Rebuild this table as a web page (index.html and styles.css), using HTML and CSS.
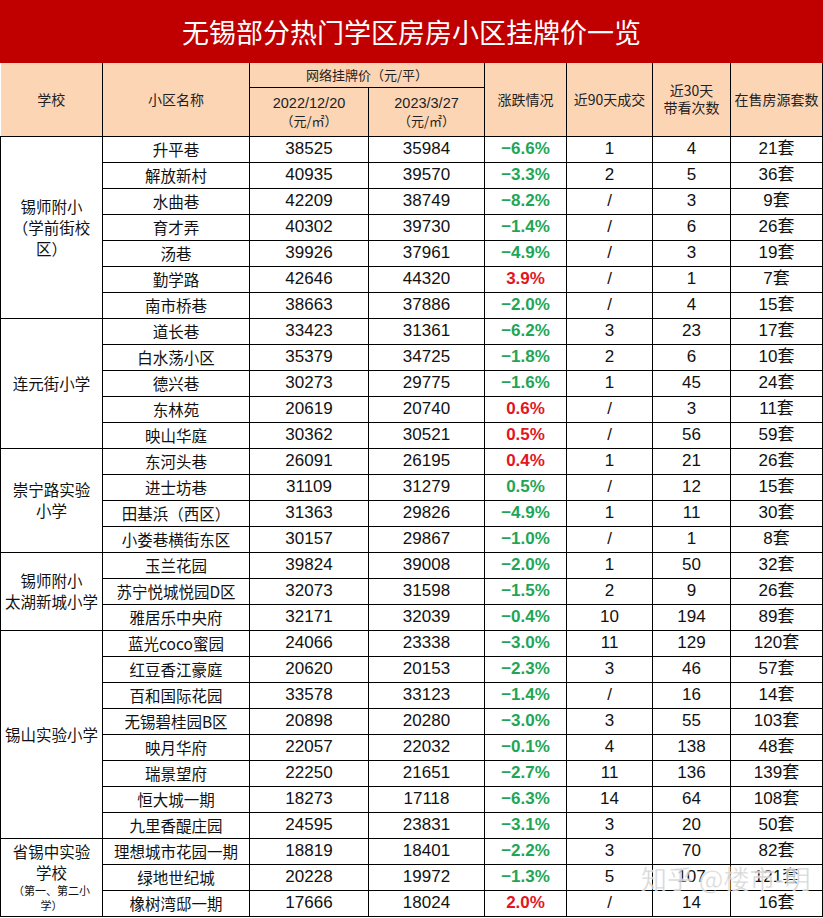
FILE: index.html
```html
<!DOCTYPE html>
<html lang="zh-CN">
<head>
<meta charset="utf-8">
<title>无锡部分热门学区房房小区挂牌价一览</title>
<link rel="stylesheet" href="styles.css">
</head>
<body>
<div class="sheet">
  <div class="title">无锡部分热门学区房房小区挂牌价一览</div>
  <table class="grid">
    <colgroup>
      <col class="c1"><col class="c2"><col class="c3"><col class="c4"><col class="c5"><col class="c6"><col class="c7"><col class="c8">
    </colgroup>
    <thead>
      <tr class="h1">
        <th rowspan="2">学校</th>
        <th rowspan="2">小区名称</th>
        <th colspan="2" class="small">网络挂牌价（元/平）</th>
        <th rowspan="2">涨跌情况</th>
        <th rowspan="2">近90天成交</th>
        <th rowspan="2" class="two">近30天<br>带看次数</th>
        <th rowspan="2">在售房源套数</th>
      </tr>
      <tr class="h2">
        <th><span class="date">2022/12/20</span><br><span class="unit">（元/㎡）</span></th>
        <th><span class="date">2023/3/27</span><br><span class="unit">（元/㎡）</span></th>
      </tr>
    </thead>
    <tbody>
      <tr><td rowspan="7" class="school">锡师附小<br>（学前街校<br>区）</td><td>升平巷</td><td class="n">38525</td><td class="n">35984</td><td class="dn">−6.6%</td><td class="n">1</td><td class="n">4</td><td class="n">21套</td></tr>
      <tr><td>解放新村</td><td class="n">40935</td><td class="n">39570</td><td class="dn">−3.3%</td><td class="n">2</td><td class="n">5</td><td class="n">36套</td></tr>
      <tr><td>水曲巷</td><td class="n">42209</td><td class="n">38749</td><td class="dn">−8.2%</td><td class="n">/</td><td class="n">3</td><td class="n">9套</td></tr>
      <tr><td>育才弄</td><td class="n">40302</td><td class="n">39730</td><td class="dn">−1.4%</td><td class="n">/</td><td class="n">6</td><td class="n">26套</td></tr>
      <tr><td>汤巷</td><td class="n">39926</td><td class="n">37961</td><td class="dn">−4.9%</td><td class="n">/</td><td class="n">3</td><td class="n">19套</td></tr>
      <tr><td>勤学路</td><td class="n">42646</td><td class="n">44320</td><td class="up">3.9%</td><td class="n">/</td><td class="n">1</td><td class="n">7套</td></tr>
      <tr><td>南市桥巷</td><td class="n">38663</td><td class="n">37886</td><td class="dn">−2.0%</td><td class="n">/</td><td class="n">4</td><td class="n">15套</td></tr>

      <tr><td rowspan="5" class="school">连元街小学</td><td>道长巷</td><td class="n">33423</td><td class="n">31361</td><td class="dn">−6.2%</td><td class="n">3</td><td class="n">23</td><td class="n">17套</td></tr>
      <tr><td>白水荡小区</td><td class="n">35379</td><td class="n">34725</td><td class="dn">−1.8%</td><td class="n">2</td><td class="n">6</td><td class="n">10套</td></tr>
      <tr><td>德兴巷</td><td class="n">30273</td><td class="n">29775</td><td class="dn">−1.6%</td><td class="n">1</td><td class="n">45</td><td class="n">24套</td></tr>
      <tr><td>东林苑</td><td class="n">20619</td><td class="n">20740</td><td class="up">0.6%</td><td class="n">/</td><td class="n">3</td><td class="n">11套</td></tr>
      <tr><td>映山华庭</td><td class="n">30362</td><td class="n">30521</td><td class="up">0.5%</td><td class="n">/</td><td class="n">56</td><td class="n">59套</td></tr>

      <tr><td rowspan="4" class="school">崇宁路实验<br>小学</td><td>东河头巷</td><td class="n">26091</td><td class="n">26195</td><td class="up">0.4%</td><td class="n">1</td><td class="n">21</td><td class="n">26套</td></tr>
      <tr><td>进士坊巷</td><td class="n">31109</td><td class="n">31279</td><td class="dn">0.5%</td><td class="n">/</td><td class="n">12</td><td class="n">15套</td></tr>
      <tr><td>田基浜（西区）</td><td class="n">31363</td><td class="n">29826</td><td class="dn">−4.9%</td><td class="n">1</td><td class="n">11</td><td class="n">30套</td></tr>
      <tr><td>小娄巷横街东区</td><td class="n">30157</td><td class="n">29867</td><td class="dn">−1.0%</td><td class="n">/</td><td class="n">1</td><td class="n">8套</td></tr>

      <tr><td rowspan="3" class="school">锡师附小<br>太湖新城小学</td><td>玉兰花园</td><td class="n">39824</td><td class="n">39008</td><td class="dn">−2.0%</td><td class="n">1</td><td class="n">50</td><td class="n">32套</td></tr>
      <tr><td>苏宁悦城悦园D区</td><td class="n">32073</td><td class="n">31598</td><td class="dn">−1.5%</td><td class="n">2</td><td class="n">9</td><td class="n">26套</td></tr>
      <tr><td>雅居乐中央府</td><td class="n">32171</td><td class="n">32039</td><td class="dn">−0.4%</td><td class="n">10</td><td class="n">194</td><td class="n">89套</td></tr>

      <tr><td rowspan="8" class="school">锡山实验小学</td><td>蓝光coco蜜园</td><td class="n">24066</td><td class="n">23338</td><td class="dn">−3.0%</td><td class="n">11</td><td class="n">129</td><td class="n">120套</td></tr>
      <tr><td>红豆香江豪庭</td><td class="n">20620</td><td class="n">20153</td><td class="dn">−2.3%</td><td class="n">3</td><td class="n">46</td><td class="n">57套</td></tr>
      <tr><td>百和国际花园</td><td class="n">33578</td><td class="n">33123</td><td class="dn">−1.4%</td><td class="n">/</td><td class="n">16</td><td class="n">14套</td></tr>
      <tr><td>无锡碧桂园B区</td><td class="n">20898</td><td class="n">20280</td><td class="dn">−3.0%</td><td class="n">3</td><td class="n">55</td><td class="n">103套</td></tr>
      <tr><td>映月华府</td><td class="n">22057</td><td class="n">22032</td><td class="dn">−0.1%</td><td class="n">4</td><td class="n">138</td><td class="n">48套</td></tr>
      <tr><td>瑞景望府</td><td class="n">22250</td><td class="n">21651</td><td class="dn">−2.7%</td><td class="n">11</td><td class="n">136</td><td class="n">139套</td></tr>
      <tr><td>恒大城一期</td><td class="n">18273</td><td class="n">17118</td><td class="dn">−6.3%</td><td class="n">14</td><td class="n">64</td><td class="n">108套</td></tr>
      <tr><td>九里香醍庄园</td><td class="n">24595</td><td class="n">23831</td><td class="dn">−3.1%</td><td class="n">3</td><td class="n">20</td><td class="n">50套</td></tr>

      <tr><td rowspan="3" class="school">省锡中实验<br>学校<br><span class="tiny">（第一、第二小<br>学）</span></td><td>理想城市花园一期</td><td class="n">18819</td><td class="n">18401</td><td class="dn">−2.2%</td><td class="n">3</td><td class="n">70</td><td class="n">82套</td></tr>
      <tr><td>绿地世纪城</td><td class="n">20228</td><td class="n">19972</td><td class="dn">−1.3%</td><td class="n">5</td><td class="n">107</td><td class="n">121套</td></tr>
      <tr><td>橡树湾邸一期</td><td class="n">17666</td><td class="n">18024</td><td class="up">2.0%</td><td class="n">/</td><td class="n">14</td><td class="n">16套</td></tr>
    </tbody>
  </table>
  <div class="watermark">知乎 @楼市-明</div>
</div>
</body>
</html>
```

FILE: styles.css
```css
html, body {
  margin: 0;
  padding: 0;
  background: #ffffff;
}

.sheet {
  position: relative;
  width: 823px;
  font-family: "Liberation Sans", "Noto Sans CJK SC", sans-serif;
  color: #111111;
}

.title {
  height: 63px;
  background: #c00000;
  color: #ffffff;
  font-family: "Noto Sans CJK SC", sans-serif;
  font-size: 27px;
  line-height: 63px;
  text-align: center;
  letter-spacing: 0;
}

.grid {
  width: 822px;
  border-collapse: collapse;
  table-layout: fixed;
}

.c1 { width: 102px; }
.c2 { width: 147px; }
.c3 { width: 119px; }
.c4 { width: 116px; }
.c5 { width: 82px; }
.c6 { width: 86px; }
.c7 { width: 78px; }
.c8 { width: 92px; }

.grid th,
.grid td {
  border: 1px solid #000000;
  padding: 0;
  text-align: center;
  vertical-align: middle;
  overflow: hidden;
  white-space: nowrap;
}

.grid thead th {
  background: #fcd5b5;
  font-weight: normal;
  font-family: "Noto Sans CJK SC", sans-serif;
  font-size: 14px;
  line-height: 16px;
  color: #222222;
}

.grid thead th.two {
  line-height: 17px;
}

.grid thead tr:first-child th {
  border-top: none;
}

.grid thead tr:first-child th:first-child {
  border-left: none;
}

.grid .h1 { height: 24px; }
.grid .h2 { height: 49px; }

.grid thead th.small {
  font-size: 13px;
}

.grid .date {
  font-family: "Liberation Sans", sans-serif;
  font-size: 14.5px;
  line-height: 18px;
}

.grid .unit {
  font-size: 13px;
  line-height: 18px;
}

.grid tbody tr {
  height: 26px;
}

.grid tbody td {
  font-family: "Noto Sans CJK SC", sans-serif;
  font-size: 15.5px;
  line-height: 20px;
}

.grid tbody td.n {
  font-family: "Liberation Sans", "Noto Sans CJK SC", sans-serif;
  font-size: 17px;
}

.grid tbody td.dn,
.grid tbody td.up {
  font-family: "Liberation Sans", sans-serif;
  font-weight: bold;
  font-size: 17px;
}

.grid tbody td.dn { color: #1ea656; }
.grid tbody td.up { color: #e3151f; }

.grid tbody td.school {
  white-space: normal;
  font-size: 15.5px;
  line-height: 21px;
}

.grid .tiny {
  font-size: 11px;
  line-height: 15px;
  display: inline-block;
}

.watermark {
  position: absolute;
  left: 641px;
  top: 862px;
  font-family: "Noto Sans CJK SC", sans-serif;
  font-size: 26px;
  line-height: 32px;
  color: rgba(195, 195, 195, 0.8);
  -webkit-text-stroke: 1px rgba(255, 255, 255, 0.6);
  white-space: nowrap;
  pointer-events: none;
}
```
